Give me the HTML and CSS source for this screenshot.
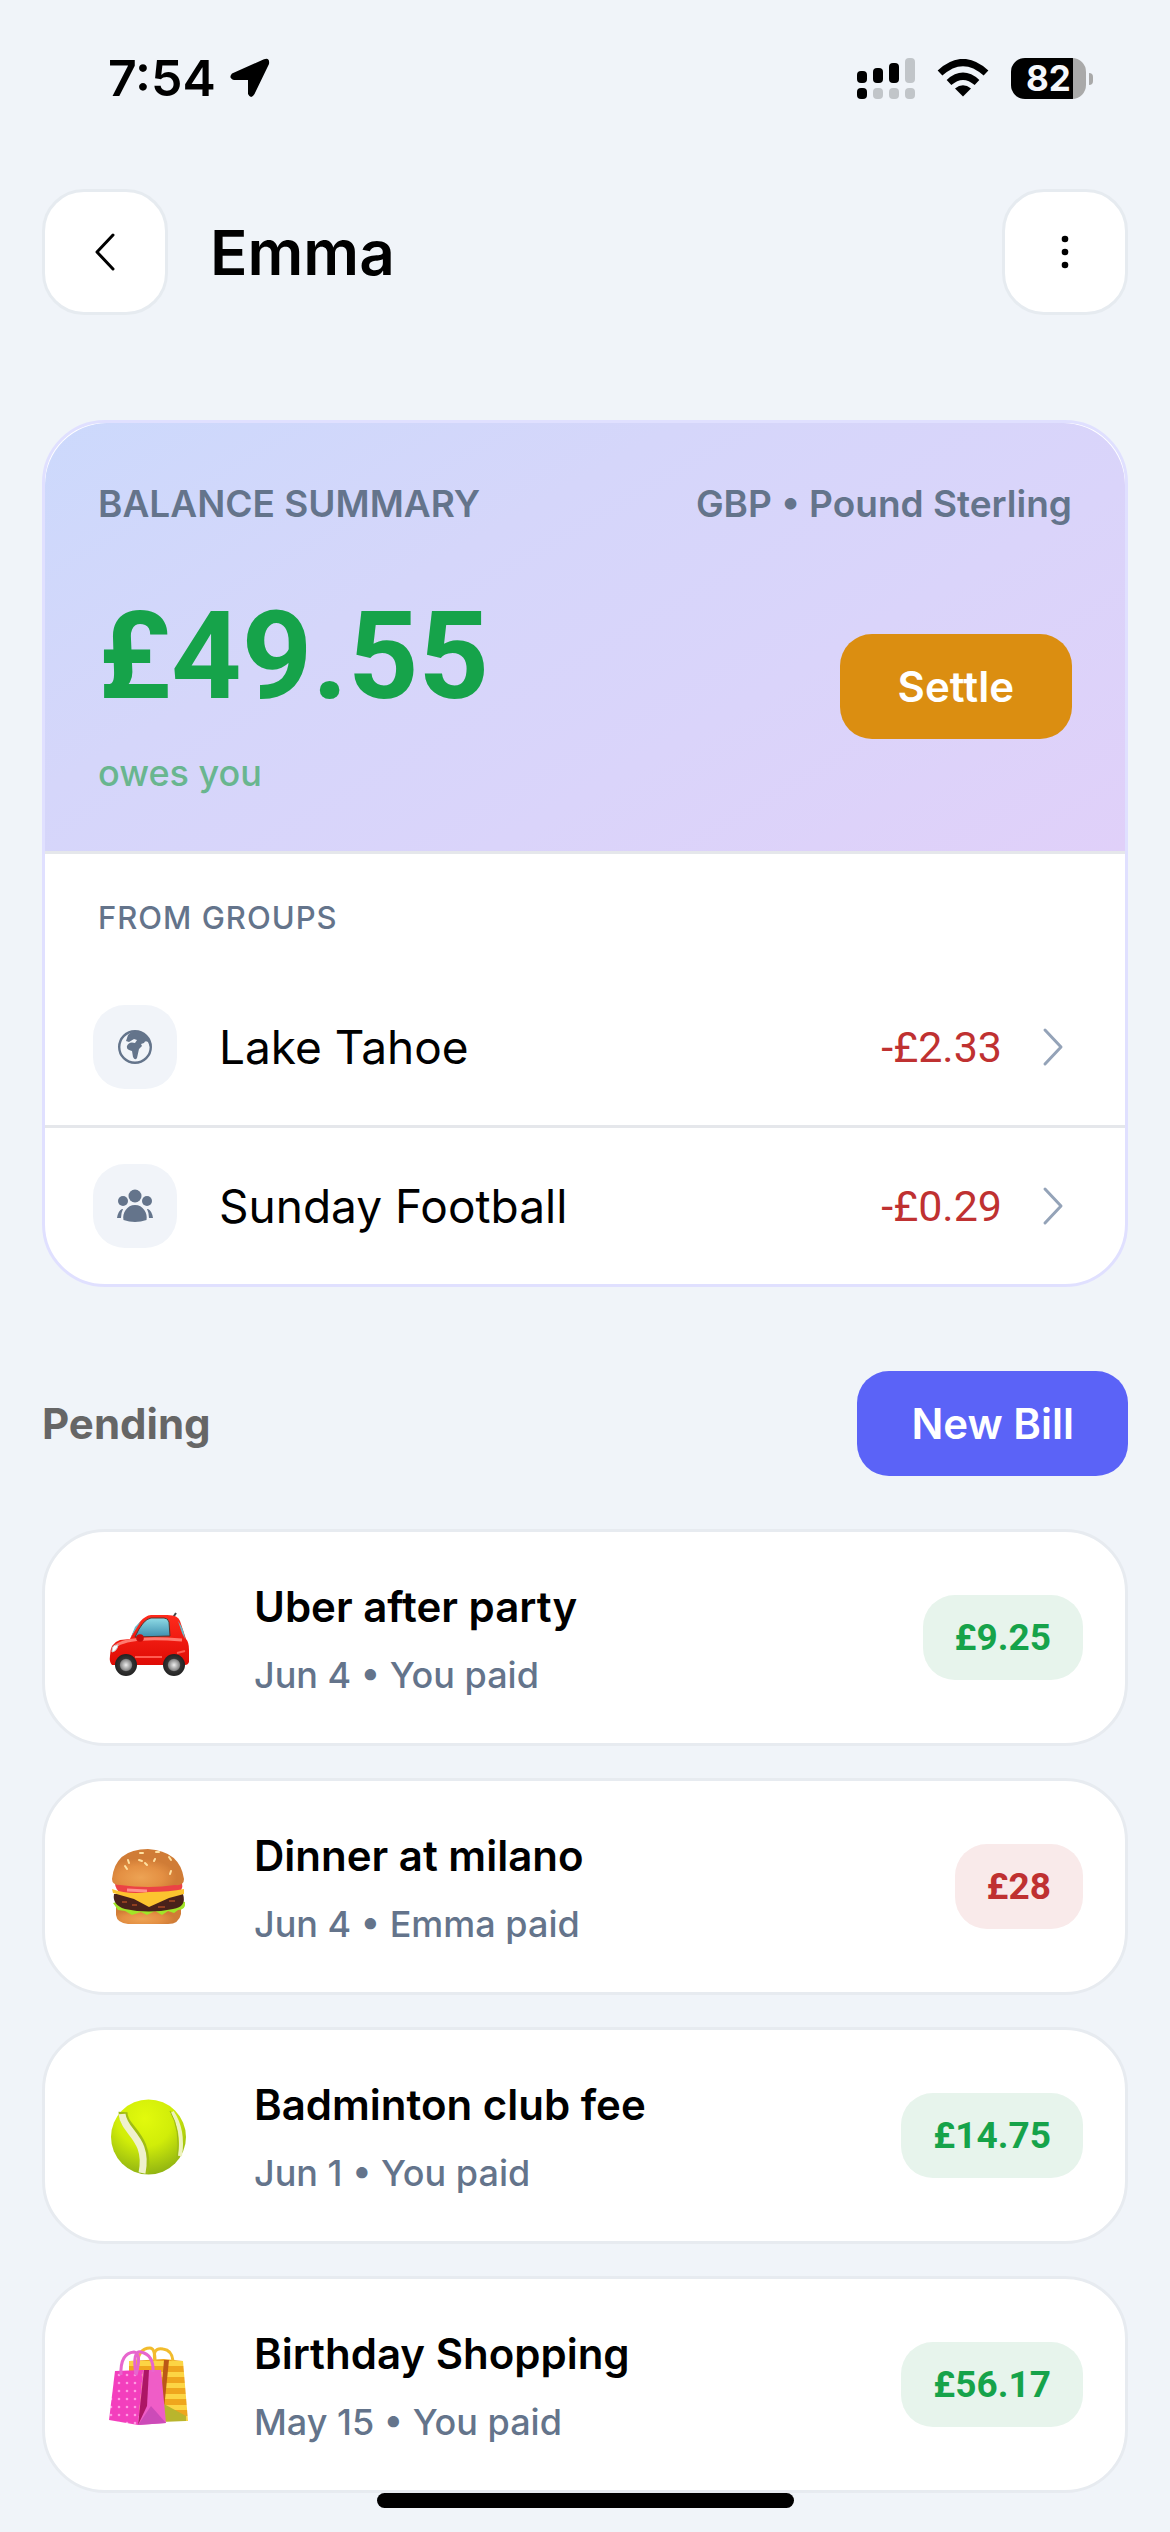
FILE: index.html
```html
<!DOCTYPE html>
<html lang="en">
<head>
    <meta charset="UTF-8">
    <meta name="viewport" content="width=device-width, initial-scale=1.0">
    <title>Emma</title>
    <link rel="stylesheet" href="styles.css">
</head>
<body>
    <div class="status-bar">
        <div class="status-left">
            <span class="time">7:54</span>
            <svg width="40" height="40" viewBox="0 0 40 40"><path d="M34 1.200Q40-1 39 6L24.500 36Q21 42 18 36V22H4Q-2 20 2 15.500Z"/></svg>
        </div>
        <div class="status-right">
            <svg width="58" height="41" viewBox="0 0 58 41">
                <rect y="13" width="10" height="12" rx="4"/>
                <rect x="16" y="10" width="10" height="15" rx="4"/>
                <rect x="32" y="5" width="10" height="20" rx="4"/>
                <rect y="30" width="10" height="11" rx="4"/>
                <g fill="#c1c5c9">
                    <rect x="48" width="10" height="25" rx="4"/>
                    <rect x="16" y="30" width="10" height="11" rx="4"/>
                    <rect x="32" y="30" width="10" height="11" rx="4"/>
                    <rect x="48" y="30" width="10" height="11" rx="4"/>
                </g>
            </svg>
            <svg width="52" height="38" viewBox="0 0 52 38">
                <path d="M3 14Q26-7 49 14M12 23.500Q26 11 40 23.500" fill="none" stroke="#000" stroke-width="7"/>
                <path d="M26 37.500L18 29.500Q26 23 34 29.500Z"/>
            </svg>
            <div class="battery"><span class="battery-level">82</span></div>
        </div>
    </div>

    <header class="header">
        <button class="icon-button" aria-label="Back">
            <svg width="36" height="42" viewBox="0 0 36 42"><path d="M26 4L10 21L26 38" fill="none" stroke="#000" stroke-width="3" stroke-linecap="round" stroke-linejoin="round"/></svg>
        </button>
        <h1>Emma</h1>
        <button class="icon-button" aria-label="More">
            <svg width="36" height="42" viewBox="0 0 36 42"><circle cx="18" cy="8" r="3.300"/><circle cx="18" cy="21" r="3.300"/><circle cx="18" cy="34" r="3.300"/></svg>
        </button>
    </header>

    <main>
        <section class="balance">
            <div class="balance-top">
                <div class="balance-labels">
                    <span>BALANCE SUMMARY</span>
                    <span>GBP • Pound Sterling</span>
                </div>
                <div class="balance-row">
                    <div>
                        <div class="total">£49.55</div>
                        <div class="owes">owes you</div>
                    </div>
                    <button class="button settle">Settle</button>
                </div>
            </div>
            <h2 class="groups-title">FROM GROUPS</h2>
            <a class="group" href="#">
                <span class="group-icon">
                    <svg width="36" height="36" viewBox="0 0 36 36">
                        <circle cx="18" cy="18" r="15.800" fill="none" stroke="#64748b" stroke-width="2.400"/>
                        <path d="M11 6Q18-1 27 5Q34 10 33 18L31 13Q28 11 27 14L24 15L25 17L22 20L20 29Q18 32 16 28L15 22Q9 21 10 17Q12 12 18 14L20 11L17 10L12 13L9 12Z" fill="#64748b"/>
                    </svg>
                </span>
                <span class="group-name">Lake Tahoe</span>
                <span class="group-amount">-£2.33</span>
                <svg class="chevron" width="36" height="42" viewBox="0 0 36 42"><path d="M10 4L26 21L10 38"/></svg>
            </a>
            <a class="group" href="#">
                <span class="group-icon">
                    <svg width="36" height="36" viewBox="0 0 36 36" fill="#64748b">
                        <circle cx="18" cy="8" r="6.500"/>
                        <circle cx="6" cy="13" r="5"/>
                        <circle cx="30" cy="13" r="5"/>
                        <path d="M6.500 32C5 25 10 17 18 17S31 25 29.500 32Q18 36 6.500 32ZM5 21Q1 23 0 30L4 30Q4 25 6 21ZM31 21Q35 23 36 30L32 30Q32 25 30 21Z"/>
                    </svg>
                </span>
                <span class="group-name">Sunday Football</span>
                <span class="group-amount">-£0.29</span>
                <svg class="chevron" width="36" height="42" viewBox="0 0 36 42"><path d="M10 4L26 21L10 38"/></svg>
            </a>
        </section>

        <div class="pending">
            <h2>Pending</h2>
            <button class="button new-bill">New Bill</button>
        </div>

        <ul class="bills">
            <li class="bill">
                <!-- car -->
                <svg width="84" height="84" viewBox="0 -6 84 84">
                    <defs>
                        <linearGradient id="glass" x2="0" y2="1"><stop stop-color="#8fdbe6"/><stop offset="1" stop-color="#3d8eae"/></linearGradient>
                        <linearGradient id="red" x2="0" y2="1"><stop stop-color="#ff2a1c"/><stop offset="1" stop-color="#df0b05"/></linearGradient>
                        <radialGradient id="hub"><stop stop-color="#eee"/><stop offset=".5" stop-color="#888"/><stop offset=".6" stop-color="#333"/><stop offset="1" stop-color="#222"/></radialGradient>
                    </defs>
                    <path d="M65 17L69 11" stroke="#444" stroke-width="2"/>
                    <path d="M23 37Q33 14 44 13H57Q71 12 73 19L79 37Q82 40 82 48V60Q81 63 78 63H5Q2 60 3 54Q3 41 13 38Z" fill="url(#red)"/>
                    <path d="M28 35Q36 17 44 16H57Q61 16 62 20L63 34Z" fill="url(#glass)" stroke="#59352c" stroke-width="1"/>
                    <path d="M71 19Q77 27 78 37L75 31Z" fill="#63bccb"/>
                    <path d="M24 35L34 19L28 25Z" fill="#63bccb"/>
                    <path d="M10 43Q25 34 75 38" fill="none" stroke="#ff7b71" stroke-width="3"/>
                    <path d="M28 55H55M70 51L78 49" fill="none" stroke="#ff5c51" stroke-width="2"/>
                    <circle cx="33" cy="36" r="3.800" fill="#c70b08"/>
                    <path d="M5 49Q5 42 11 43Q10 49 5 50Z" fill="#fff" stroke="#ccc"/>
                    <circle cx="19" cy="63" r="11" fill="url(#hub)"/>
                    <circle cx="67" cy="63" r="11" fill="url(#hub)"/>
                </svg>
                <div class="bill-info">
                    <div class="bill-name">Uber after party</div>
                    <div class="bill-date">Jun 4 • You paid</div>
                </div>
                <span class="amount">£9.25</span>
            </li>
            <li class="bill">
                <!-- burger -->
                <svg width="84" height="84" viewBox="0 0 84 84">
                    <defs>
                        <radialGradient id="bun" cy=".75" cx=".4"><stop stop-color="#eda354"/><stop offset=".6" stop-color="#e49043"/><stop offset="1" stop-color="#d07c36"/></radialGradient>
                    </defs>
                    <path d="M9 59H74V69Q72 79 61 79H21Q10 78 9 70Z" fill="url(#bun)"/>
                    <path d="M6 58Q42 46 78 57Q79 65 71 65L67 68L61 66L55 70L48 66L40 70L34 67L25 70L18 66L11 65Z" fill="#a1e527"/>
                    <path d="M7 49H76Q80 62 66 64Q42 69 18 64Q5 60 7 49Z" fill="#49221a"/>
                    <path d="M15 57H20M25 60H30M51 62H58M62 56H68" stroke="#8f3e20" stroke-width="2"/>
                    <path d="M8 38H75Q77 46 68 49H15Q8 45 8 38Z" fill="#ec4245"/>
                    <path d="M20 45L40 46" stroke="#ff918e" stroke-width="3"/>
                    <path d="M5 44Q21 50 42 47Q63 47 77 44V49L62 53L42 62L27 54L6 48Z" fill="#fcc42f"/>
                    <path d="M5 34Q8 4 41 4Q73 6 77 34Q77 41 68 40Q42 44 13 40Q5 40 5 34Z" fill="url(#bun)"/>
                    <path d="M21 15L22 18M33 8H36M32 15L35 16M38 18L40 20M18 21L20 24M49 7H52M48 14L47 16M62 12L64 15M64 26L63 29" stroke="#ffe1a0" stroke-width="2" stroke-linecap="round"/>
                </svg>
                <div class="bill-info">
                    <div class="bill-name">Dinner at milano</div>
                    <div class="bill-date">Jun 4 • Emma paid</div>
                </div>
                <span class="amount negative">£28</span>
            </li>
            <li class="bill">
                <!-- tennis ball -->
                <svg width="84" height="84" viewBox="0 0 84 84">
                    <defs>
                        <radialGradient id="ball" cx=".45" cy=".25" r=".75"><stop stop-color="#e2fa0c"/><stop offset=".5" stop-color="#d1ed09"/><stop offset="1" stop-color="#92b512"/></radialGradient>
                    </defs>
                    <circle cx="41.500" cy="43" r="37.500" fill="url(#ball)"/>
                    <path d="M16 18C15 35 43 41 37 79" fill="none" stroke="#a1bd13" stroke-width="9"/>
                    <path d="M15 20C17 39 42 44 35 79" fill="none" stroke="#eff1cd" stroke-width="7"/>
                    <path d="M65 18Q77 36 73 62" fill="none" stroke="#edf2bd" stroke-width="4"/>
                    <path d="M63 17Q74 36 70 65" fill="none" stroke="#9ab71a" stroke-width="1"/>
                </svg>
                <div class="bill-info">
                    <div class="bill-name">Badminton club fee</div>
                    <div class="bill-date">Jun 1 • You paid</div>
                </div>
                <span class="amount">£14.75</span>
            </li>
            <li class="bill">
                <!-- shopping bags -->
                <svg width="84" height="84" viewBox="0 4 84 84">
                    <defs>
                        <pattern id="stripes" width="10" height="11" patternUnits="userSpaceOnUse"><rect width="10" height="11" fill="#efa61d"/><rect width="10" height="5" fill="#fcd544"/></pattern>
                        <pattern id="dots" width="8" height="8" patternUnits="userSpaceOnUse"><rect width="8" height="8" fill="#f33fbd"/><circle cx="4" cy="4" r="1.300" fill="#ff99e2"/></pattern>
                    </defs>
                    <path d="M22 22L57 20L76 22L81 82L56 82L22 75Z" fill="url(#stripes)"/>
                    <path d="M57 21H62L57 70L52 80Z" fill="#bb5817"/>
                    <path d="M57 65L79 77V82L54 83Z" fill="#b9b52d"/>
                    <path d="M30 27Q31 9 43 9Q48 9 48 22M48 22Q45 8 56 10Q65 11 66 22" fill="none" stroke="#f2bc2d" stroke-width="3"/>
                    <path d="M8 32L36 31L31 86L2 81Z" fill="url(#dots)"/>
                    <path d="M36 31L54 31L59 84L31 86Z" fill="#ef5dc7"/>
                    <path d="M37 31H42L40 67L31 86Z" fill="#ad1665"/>
                    <path d="M44 67L59 84L31 86Z" fill="#cc4bb8"/>
                    <path d="M14 36Q13 14 27 13Q35 14 29 36M29 36Q25 11 34 13Q47 16 46 33" fill="none" stroke="#e766ce" stroke-width="3"/>
                </svg>
                <div class="bill-info">
                    <div class="bill-name">Birthday Shopping</div>
                    <div class="bill-date">May 15 • You paid</div>
                </div>
                <span class="amount">£56.17</span>
            </li>
        </ul>
    </main>
    <div class="home-indicator"></div>
</body>
</html>
```
FILE: styles.css
```css
* {
    box-sizing: border-box;
}
body {
    margin: 0;
    padding: 0 42px 40px;
    background-color: #f0f4f9;
    font-family: Inter, "Liberation Sans", sans-serif;
    color: #000;
}
h1, h2, ul {
    margin: 0;
    padding: 0;
}
svg {
    flex-shrink: 0;
}
button {
    border: none;
    font-family: inherit;
    cursor: pointer;
}

/* Status bar */
.status-bar {
    display: flex;
    justify-content: space-between;
    align-items: center;
    height: 156px;
    padding: 0 34px 0 66px;
}
.status-left {
    display: flex;
    align-items: center;
    gap: 14px;
}
.time {
    font-size: 50px;
    font-weight: 600;
}
.status-right {
    display: flex;
    align-items: center;
    gap: 22px;
}
.battery {
    position: relative;
    width: 75px;
    height: 41px;
    margin-right: 8px;
    border-radius: 14px;
    background: linear-gradient(to right, #000 62px, #a9a9a9 62px);
}
.battery::after {
    content: "";
    position: absolute;
    left: 78px;
    top: 15px;
    width: 4px;
    height: 12px;
    border-radius: 0 4px 4px 0;
    background-color: #a9a9a9;
}
.battery-level {
    display: block;
    padding-left: 15px;
    font-size: 35px;
    line-height: 41px;
    font-weight: 700;
    color: #f5f7fb;
}

/* Header */
.header {
    display: flex;
    align-items: center;
    margin: 33px 0 105px;
}
.header h1 {
    flex: 1;
    padding-left: 42px;
    font-size: 62px;
    font-weight: 600;
}
.icon-button {
    display: flex;
    align-items: center;
    justify-content: center;
    width: 126px;
    height: 126px;
    padding: 0;
    border: 3px solid #e6ebf0;
    border-radius: 42px;
    background-color: #fff;
}

/* Balance card */
.balance {
    border: 3px solid #e0e0ff;
    border-radius: 63px;
    background-color: #fff;
    overflow: hidden;
}
.balance-top {
    padding: 57px 53px 54px;
    border-bottom: 3px solid #e5e7eb;
    border-radius: 62px 62px 0 0;
    background-image: linear-gradient(150deg, #ccd9fc, #d5d6fa 35%, #dad4fa 65%, #e0d0f9);
}
.balance-labels {
    display: flex;
    justify-content: space-between;
    font-size: 37px;
    line-height: 48px;
    font-weight: 600;
    color: #64748b;
}
.balance-row {
    display: flex;
    justify-content: space-between;
    align-items: center;
    margin-top: 47px;
}
.total {
    font-family: Roboto, Inter, sans-serif;
    font-size: 123px;
    line-height: 162px;
    font-weight: 700;
    color: #16a34a;
}
.owes {
    font-size: 36px;
    line-height: 48px;
    margin-top: 12px;
    font-weight: 500;
    color: #69b68f;
}
.button {
    height: 105px;
    padding: 0 54px;
    border-radius: 32px;
    font-size: 42px;
    font-weight: 600;
    color: #fff;
}
.settle {
    padding: 0 58px;
    background-color: #db8e11;
}
.new-bill {
    background-color: #5b63f7;
}
.groups-title {
    padding: 40px 53px 27px;
    font-size: 31px;
    line-height: 48px;
    font-weight: 500;
    letter-spacing: 1px;
    color: #64748b;
}
.group {
    display: flex;
    align-items: center;
    padding: 36px 54px 36px 48px;
    color: #000;
    text-decoration: none;
}
.group + .group {
    border-top: 3px solid #e5e7eb;
}
.group-icon {
    display: flex;
    align-items: center;
    justify-content: center;
    width: 84px;
    height: 84px;
    border-radius: 32px;
    background-color: #f1f4f9;
}
.group-name {
    flex: 1;
    padding-left: 42px;
    font-size: 46px;
}
.group-amount {
    padding-right: 33px;
    font-family: Roboto, Inter, sans-serif;
    font-size: 43px;
    color: #bf3131;
}
.chevron {
    fill: none;
    stroke: #94a3b8;
    stroke-width: 3;
    stroke-linecap: round;
    stroke-linejoin: round;
}

/* Pending bills */
.pending {
    display: flex;
    justify-content: space-between;
    align-items: center;
    margin: 84px 0 53px;
}
.pending h2 {
    font-size: 42px;
    font-weight: 700;
    color: #666;
}
.bills {
    display: flex;
    flex-direction: column;
    gap: 32px;
    list-style: none;
}
.bill {
    display: flex;
    align-items: center;
    padding: 41px 42px 41px 62px;
    border: 3px solid #e7ebf0;
    border-radius: 63px;
    background-color: #fff;
}
.bill-info {
    flex: 1;
    padding: 4px 0 0 63px;
}
.bill-name {
    font-size: 42px;
    line-height: 60px;
    font-weight: 600;
}
.bill-date {
    margin-top: 11px;
    font-size: 36px;
    line-height: 54px;
    font-weight: 500;
    color: #64748b;
}
.amount {
    padding: 0 32px;
    border-radius: 32px;
    background-color: #e7f4ec;
    font-family: Roboto, Inter, sans-serif;
    font-size: 37px;
    line-height: 85px;
    font-weight: 700;
    color: #16a34a;
}
.amount.negative {
    background-color: #f9eaea;
    color: #bf3131;
}

.home-indicator {
    position: fixed;
    left: 50%;
    bottom: 24px;
    width: 417px;
    height: 15px;
    margin-left: -208px;
    border-radius: 8px;
    background-color: #000;
}
```
